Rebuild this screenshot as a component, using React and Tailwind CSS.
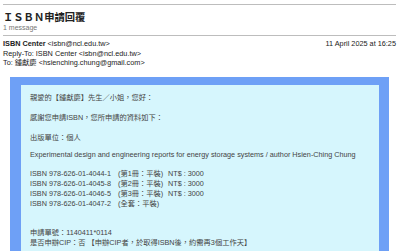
import React from "react";

const isbns = [
  { no: "ISBN 978-626-01-4044-1", vol: "(第1冊：平裝)", price: "NT$ : 3000" },
  { no: "ISBN 978-626-01-4045-8", vol: "(第2冊：平裝)", price: "NT$ : 3000" },
  { no: "ISBN 978-626-01-4046-5", vol: "(第3冊：平裝)", price: "NT$ : 3000" },
  { no: "ISBN 978-626-01-4047-2", vol: "(全套：平裝)", price: "" },
];

const App = () => {
  return (
    <div
      className="w-[400px] h-[251px] overflow-hidden bg-white pl-[3px] pr-[4px] text-[#222]"
      style={{ fontFamily: '"Liberation Sans", Arial, "Noto Sans CJK TC", sans-serif' }}
    >
      <div className="mt-[4px] h-px bg-[#bdbdbd]" />

      <h1 className="mt-[7px] text-[10.3px] leading-[12px] font-bold text-[#222]">ＩＳＢＮ申請回覆</h1>
      <div className="text-[7px] leading-[8px] text-[#777]">1 message</div>

      <div className="mt-[3px] h-px bg-[#bdbdbd]" />

      {/* Header */}
      <div className="mt-[3px] text-[7.3px] leading-[9.5px]">
        <div className="flex justify-between">
          <div>
            <span className="font-bold">ISBN Center</span> &lt;isbn@ncl.edu.tw&gt;
          </div>
          <div>11 April 2025 at 16:25</div>
        </div>
        <div>Reply-To: ISBN Center &lt;isbn@ncl.edu.tw&gt;</div>
        <div>To: 鍾獻慶 &lt;hsienching.chung@gmail.com&gt;</div>
      </div>

      {/* Message box */}
      <div className="mt-[9px] ml-[7px] w-[379px] bg-[#6ea0f6] pt-[8px] pl-[11px] pr-[10px]">
        <div className="bg-[#d6f6fd] pt-[8px] pl-[9px] pb-[20px] text-[7.25px] leading-[10px] text-[#444]">
          <p>親愛的【鍾獻慶】先生／小姐，您好：</p>
          <p className="mt-[10px]">感謝您申請ISBN，您所申請的資料如下：</p>
          <p className="mt-[10px]">出版單位：個人</p>
          <p className="mt-[7px]">
            Experimental design and engineering reports for energy storage systems / author Hsien-Ching Chung
          </p>
          <div className="mt-[9px]">
            {isbns.map((r) => (
              <div key={r.no} className="flex">
                <span className="w-[88px]">{r.no}</span>
                <span className="w-[50px]">{r.vol}</span>
                <span>{r.price}</span>
              </div>
            ))}
          </div>
          <p className="mt-[19px]">申請單號：1140411*0114</p>
          <p>是否申辦CIP：否 【申辦CIP者，於取得ISBN後，約需再3個工作天】</p>
        </div>
      </div>
    </div>
  );
};

export default App;
